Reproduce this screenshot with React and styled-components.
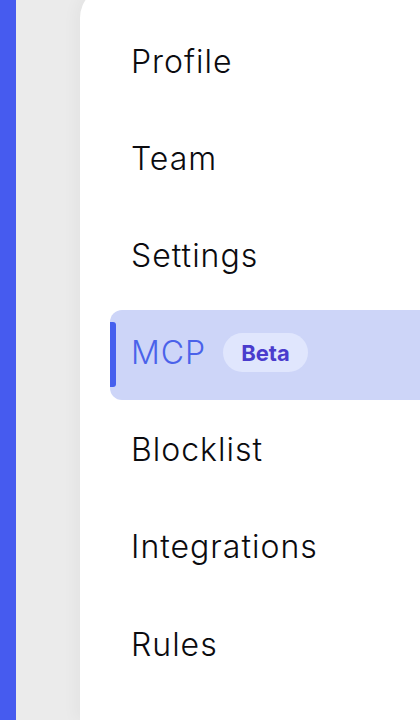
import React from "react";
import styled, { createGlobalStyle, css } from "styled-components";

const GlobalStyle = createGlobalStyle`
  html, body {
    margin: 0;
    padding: 0;
    height: 100%;
    overflow: hidden;
  }
  body {
    font-family: Inter, "Noto Sans", "Liberation Sans", sans-serif;
    background: #ebebeb;
  }
  #root {
    height: 100%;
  }
`;

const Layout = styled.div`
  display: flex;
  height: 100vh;
  background: #ebebeb;
`;

const Rail = styled.div`
  width: 16px;
  flex: none;
  background: #465bef;
`;

const Gutter = styled.div`
  width: 64px;
  flex: none;
  background: #ebebeb;
`;

const Panel = styled.main`
  flex: 1;
  margin-top: -14px;
  background: #ffffff;
  border-top-left-radius: 32px;
  box-shadow: -6px 0 14px rgba(0, 0, 0, 0.03);
  padding: 32.5px 0 0 30px;
  overflow: hidden;
`;

const NavList = styled.nav`
  display: flex;
  flex-direction: column;
  gap: 7.2px;
`;

const NavItem = styled.a`
  position: relative;
  display: flex;
  align-items: center;
  gap: 17px;
  height: 90px;
  box-sizing: border-box;
  padding: 0 0 5px 21px;
  border-radius: 12px 0 0 12px;
  font-size: 32px;
  font-weight: 300;
  letter-spacing: 1px;
  color: #0b0b0f;
  text-decoration: none;
  white-space: nowrap;

  ${(p) =>
    p.$active &&
    css`
      background: #cdd5f8;
      color: #4a62ea;

      &::before {
        content: "";
        position: absolute;
        left: 0;
        top: 12px;
        bottom: 13px;
        width: 6px;
        border-radius: 0 3px 3px 0;
        background: #4660ee;
      }
    `}
`;

const Badge = styled.span`
  display: inline-flex;
  align-items: center;
  justify-content: center;
  height: 39px;
  padding: 0 18px;
  border-radius: 20px;
  background: #e0e6fd;
  color: #4a3ccd;
  font-size: 22px;
  font-weight: 700;
  letter-spacing: 0;
`;

const items = [
  { label: "Profile" },
  { label: "Team" },
  { label: "Settings" },
  { label: "MCP", active: true, badge: "Beta" },
  { label: "Blocklist" },
  { label: "Integrations" },
  { label: "Rules" },
];

export default function App() {
  return (
    <>
      <GlobalStyle />
      <Layout>
        <Rail />
        <Gutter />
        <Panel>
          <NavList>
            {items.map((it) => (
              <NavItem key={it.label} $active={it.active}>
                {it.label}
                {it.badge && <Badge>{it.badge}</Badge>}
              </NavItem>
            ))}
          </NavList>
        </Panel>
      </Layout>
    </>
  );
}
